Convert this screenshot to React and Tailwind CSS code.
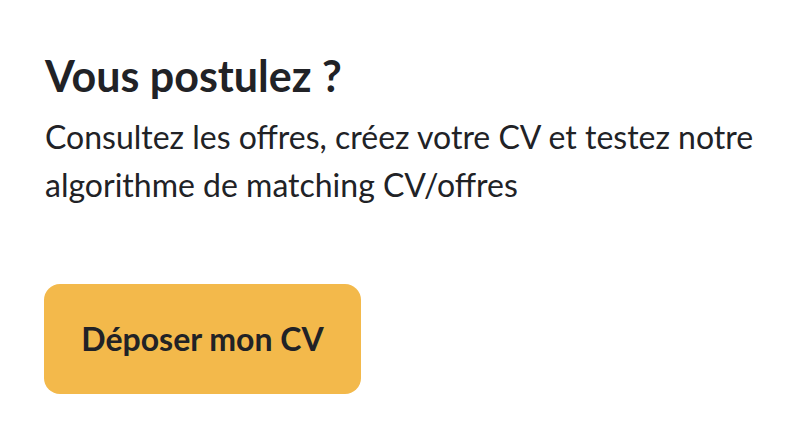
export default function App() {
  return (
    <div className="w-[800px] h-[444px] bg-white text-[#212226]" style={{ fontFamily: 'Lato, "Noto Sans", sans-serif' }}>
      <div className="pl-[45px] pt-[50px]">
        <h1 className="text-[43px] font-bold leading-[1.2]">Vous postulez ?</h1>
        <p className="text-[32px] leading-[48px] mt-[11px] w-[730px]">
          Consultez les offres, créez votre CV et testez notre algorithme de matching CV/offres
        </p>
        <button className="mt-[75px] -ml-px w-[317px] h-[110px] rounded-[16px] bg-[#f3b94b] text-[32px] font-bold text-[#212226]">
          Déposer mon CV
        </button>
      </div>
    </div>
  );
}
